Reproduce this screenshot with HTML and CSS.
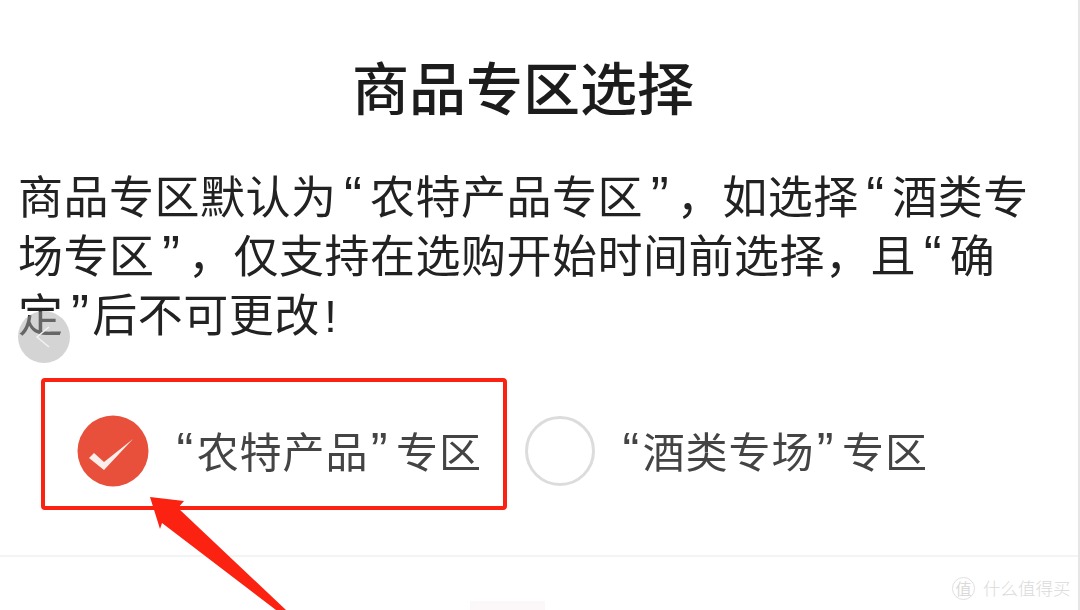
FILE: index.html
```html
<!DOCTYPE html>
<html lang="zh-CN">
<head>
  <meta charset="utf-8">
  <title>商品专区选择</title>
  <link rel="stylesheet" href="styles.css">
</head>
<body>
  <div class="dialog">
    <h1 class="dialog-title">商品专区选择</h1>
    <p class="dialog-text">商品专区默认为<span class="q">“</span>农特产品专区<span class="q">”</span>，如选择<span class="q">“</span>酒类专场专区<span class="q">”</span>，仅支持在选购开始时间前选择，且<span class="q">“</span>确定<span class="q q-tight">”</span>后不可更改<span class="q-bang">!</span></p>
    <div class="options">
      <div class="option option-first">
        <svg class="radio" viewBox="0 0 72 72">
          <circle cx="36" cy="36" r="35.5" fill="#e8503c"/>
          <path d="M12 43 L17 38 L27 47 L56 24 L27 55 Z" fill="#fbeeea"/>
        </svg>
        <span class="option-label"><span class="q">“</span>农特产品<span class="q q-close">”</span>专区</span>
      </div>
      <div class="option">
        <span class="radio radio-empty"></span>
        <span class="option-label"><span class="q">“</span>酒类专场<span class="q q-close">”</span>专区</span>
      </div>
    </div>
    <div class="divider"></div>
    <div class="confirm-hint"></div>
  </div>

  <!-- annotation layer -->
  <div class="prev-btn">
    <svg viewBox="0 0 52 52" width="52" height="52"><path d="M31 16 L19 26 L31 36" fill="none" stroke="#f2f2f2" stroke-width="1.5"/></svg>
  </div>
  <div class="red-box"></div>
  <svg class="red-arrow" viewBox="0 0 160 120" width="160" height="120">
    <path d="M5 2 L39 6 L33 13 L141 115 L131 115 L17 28 L15 34 Z" fill="#fb2212"/>
  </svg>
  <div class="watermark">
    <span class="watermark-badge">值</span>
    <span class="watermark-text">什么值得买</span>
  </div>
</body>
</html>
```

FILE: styles.css
```css
html, body, div, p, h1 {
  margin: 0;
  padding: 0;
}
body {
  width: 1080px;
  height: 610px;
  overflow: hidden;
  position: relative;
  background: #fff;
  font-family: "Noto Sans CJK SC", "Noto Sans", sans-serif;
  color: #2b2b2b;
}
.dialog {
  height: 610px;
  box-sizing: border-box;
  border-right: 2px solid #e6e6e6;
  padding-top: 52px;
  filter: blur(0.7px);
}
.dialog-title {
  padding-right: 32px;
  font-size: 57px;
  line-height: 66px;
  font-weight: 500;
  text-align: center;
  color: #1c1c1c;
}
.dialog-text {
  margin-top: 47px;
  padding-left: 18px;
  width: 1016px;
  font-size: 45px;
  line-height: 59px;
  letter-spacing: 0.5px;
  color: #222;
}
.q {
  font-family: "Liberation Sans", sans-serif;
  font-size: 1.2em;
  line-height: 0;
  padding: 0 0.14em;
}
.q-tight {
  padding-right: 0.05em;
}
.q-bang {
  font-family: "Liberation Sans", sans-serif;
  line-height: 0;
  padding-left: 0.1em;
}
.options {
  margin-top: 73px;
  padding-left: 77px;
  display: flex;
  align-items: center;
  height: 72px;
}
.option {
  display: flex;
  align-items: center;
}
.option-first {
  width: 448px;
}
.radio {
  width: 72px;
  height: 72px;
  flex: none;
  box-sizing: border-box;
}
.radio-empty {
  width: 70px;
  height: 70px;
  border: 3px solid #dcdcdc;
  border-radius: 50%;
}
.option-label {
  margin-left: 25px;
  padding-bottom: 4px;
  font-size: 42px;
  letter-spacing: 0.9px;
  color: #444;
}
.option-label .q {
  padding: 0 0.05em;
}
.option-label .q-close {
  padding-right: 0.15em;
}
.divider {
  margin-top: 68px;
  height: 2px;
  background: #f4f4f4;
}
.confirm-hint {
  margin: 44px 0 0 470px;
  width: 75px;
  height: 12px;
  background: #fcf8f9;
}
.prev-btn {
  position: absolute;
  left: 18px;
  top: 311px;
  width: 52px;
  height: 52px;
  border-radius: 50%;
  background: rgba(170, 170, 170, 0.5);
}
.red-box {
  position: absolute;
  left: 41px;
  top: 378px;
  width: 458px;
  height: 124px;
  border: 4px solid #fb2212;
  border-radius: 4px;
  filter: blur(0.4px);
}
.red-arrow {
  position: absolute;
  left: 145px;
  top: 495px;
}
.watermark {
  position: absolute;
  left: 952px;
  top: 576px;
  display: flex;
  align-items: center;
  gap: 8px;
  color: #dadada;
}
.watermark-badge {
  width: 21px;
  height: 21px;
  border: 1px solid #e0e0e0;
  border-radius: 50%;
  font-size: 16px;
  line-height: 20px;
  text-align: center;
}
.watermark-text {
  font-size: 17.5px;
  font-weight: 300;
  line-height: 24px;
}
```
